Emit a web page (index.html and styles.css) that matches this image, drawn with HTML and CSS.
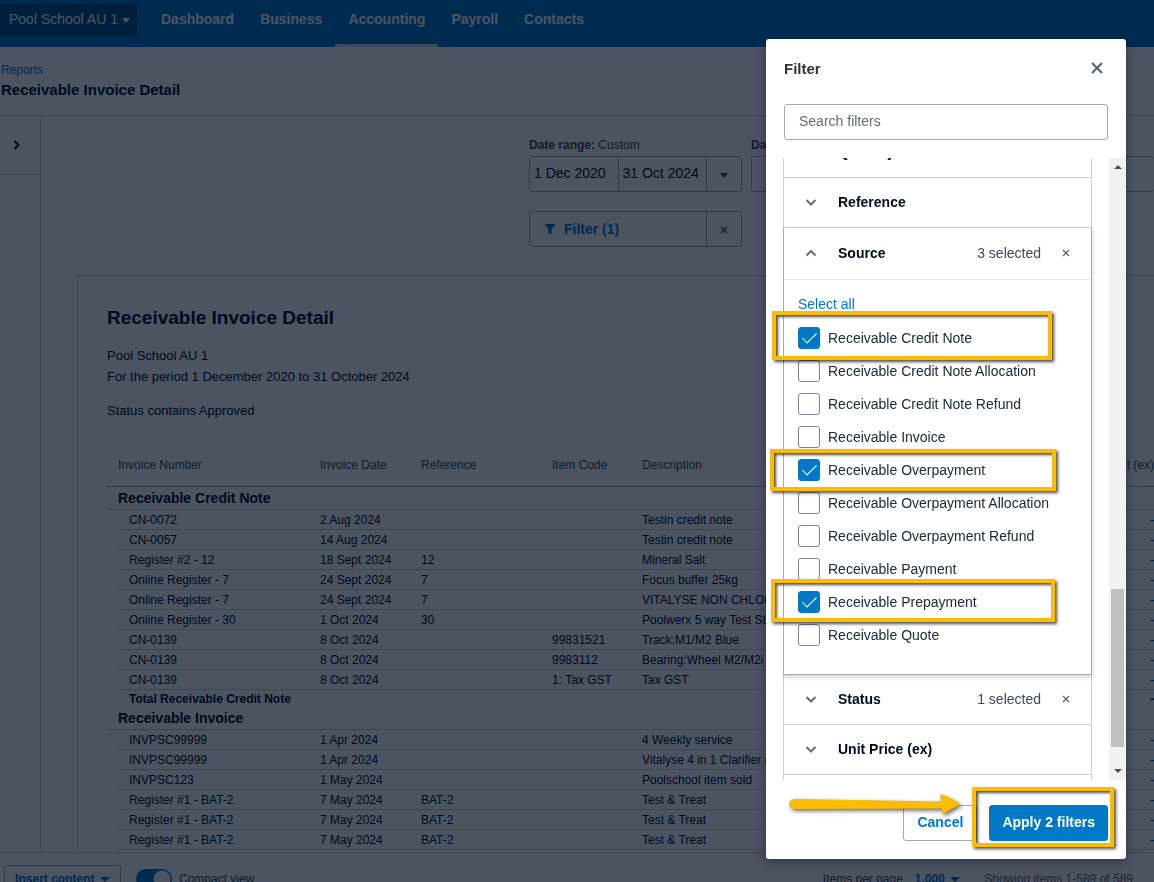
FILE: index.html
```html
<!DOCTYPE html>
<html lang="en">
<head>
    <meta charset="utf-8">
    <meta name="viewport" content="width=device-width, initial-scale=1.0">
    <title>Receivable Invoice Detail</title>
    <link rel="stylesheet" href="styles.css">
</head>
<body>
    <div class="page">
        <header class="topbar">
            <button class="org-button" type="button">Pool School AU 1 <span class="caret"></span></button>
            <nav class="topnav">
                <a class="nav-link" href="#">Dashboard</a>
                <a class="nav-link" href="#">Business</a>
                <a class="nav-link active" href="#">Accounting</a>
                <a class="nav-link" href="#">Payroll</a>
                <a class="nav-link" href="#">Contacts</a>
            </nav>
        </header>

        <div class="page-title">
            <a class="breadcrumb" href="#">Reports</a>
            <h1>Receivable Invoice Detail</h1>
        </div>

        <div class="content">
            <aside class="side">
                <button class="side-toggle" type="button" aria-label="Expand">
                    <svg width="8" height="10" viewBox="0 0 8 10"><path d="M1.5 1 L5.5 5 L1.5 9" fill="none" stroke="#000a1e" stroke-width="2"/></svg>
                </button>
            </aside>
            <main class="main">
                <div class="settings">
                    <div class="settings-row">
                        <div class="setting">
                            <label for="dateFrom"><b>Date range:</b> Custom</label>
                            <div class="field">
                                <input id="dateFrom" type="text" value="1 Dec 2020">
                                <input type="text" value="31 Oct 2024" aria-label="Date to">
                                <button class="field-end" type="button" aria-label="Choose range"><span class="caret"></span></button>
                            </div>
                        </div>
                        <div class="setting wide">
                            <label for="dateBy"><b>Date</b></label>
                            <div class="field">
                                <input id="dateBy" type="text">
                            </div>
                        </div>
                    </div>
                    <div class="field filter-field">
                        <button class="filter-open" type="button">
                            <svg width="12" height="12" viewBox="0 0 12 12"><path d="M0.5 1 H11.5 L7.5 6 V11 H4.5 V6 Z" fill="#0078c8"/></svg>
                            Filter (1)
                        </button>
                        <button class="field-end" type="button" aria-label="Clear filter">
                            <svg width="8" height="8" viewBox="0 0 8 8"><path d="M1 1 L7 7 M7 1 L1 7" stroke="#404756" stroke-width="1.2"/></svg>
                        </button>
                    </div>
                </div>

                <section class="report">
                    <h2>Receivable Invoice Detail</h2>
                    <p class="report-info">Pool School AU 1<br>For the period 1 December 2020 to 31 October 2024</p>
                    <p class="report-status">Status contains Approved</p>
                    <table class="report-table">
                        <colgroup>
                            <col class="col-indent"><col class="col-number"><col class="col-date"><col class="col-ref"><col class="col-code"><col class="col-desc"><col class="col-amount">
                        </colgroup>
                        <thead>
                            <tr><th></th><th>Invoice Number</th><th>Invoice Date</th><th>Reference</th><th>Item Code</th><th>Description</th><th class="num">Amount (ex)</th></tr>
                        </thead>
                        <tbody>
                            <tr class="group"><th></th><th colspan="6">Receivable Credit Note</th></tr>
                            <tr><td></td><td>CN-0072</td><td>2 Aug 2024</td><td></td><td></td><td>Testin credit note</td><td class="num">-</td></tr>
                            <tr><td></td><td>CN-0057</td><td>14 Aug 2024</td><td></td><td></td><td>Testin credit note</td><td class="num">-</td></tr>
                            <tr><td></td><td>Register #2 - 12</td><td>18 Sept 2024</td><td>12</td><td></td><td>Mineral Salt</td><td class="num">-</td></tr>
                            <tr><td></td><td>Online Register - 7</td><td>24 Sept 2024</td><td>7</td><td></td><td>Focus buffer 25kg</td><td class="num">-</td></tr>
                            <tr><td></td><td>Online Register - 7</td><td>24 Sept 2024</td><td>7</td><td></td><td>VITALYSE NON CHLORINE</td><td class="num">-</td></tr>
                            <tr><td></td><td>Online Register - 30</td><td>1 Oct 2024</td><td>30</td><td></td><td>Poolwerx 5 way Test Strips</td><td class="num">-</td></tr>
                            <tr><td></td><td>CN-0139</td><td>8 Oct 2024</td><td></td><td>99831521</td><td>Track:M1/M2 Blue</td><td class="num">-</td></tr>
                            <tr><td></td><td>CN-0139</td><td>8 Oct 2024</td><td></td><td>9983112</td><td>Bearing:Wheel M2/M2i</td><td class="num">-</td></tr>
                            <tr><td></td><td>CN-0139</td><td>8 Oct 2024</td><td></td><td>1: Tax GST</td><td>Tax GST</td><td class="num">-</td></tr>
                            <tr class="total"><td></td><td colspan="5">Total Receivable Credit Note</td><td class="num">-</td></tr>
                            <tr class="group"><th></th><th colspan="6">Receivable Invoice</th></tr>
                            <tr><td></td><td>INVPSC99999</td><td>1 Apr 2024</td><td></td><td></td><td>4 Weekly service</td><td class="num">-</td></tr>
                            <tr><td></td><td>INVPSC99999</td><td>1 Apr 2024</td><td></td><td></td><td>Vitalyse 4 in 1 Clarifier (1L)</td><td class="num">-</td></tr>
                            <tr><td></td><td>INVPSC123</td><td>1 May 2024</td><td></td><td></td><td>Poolschool item sold</td><td class="num">-</td></tr>
                            <tr><td></td><td>Register #1 - BAT-2</td><td>7 May 2024</td><td>BAT-2</td><td></td><td>Test &amp; Treat</td><td class="num">-</td></tr>
                            <tr><td></td><td>Register #1 - BAT-2</td><td>7 May 2024</td><td>BAT-2</td><td></td><td>Test &amp; Treat</td><td class="num">-</td></tr>
                            <tr><td></td><td>Register #1 - BAT-2</td><td>7 May 2024</td><td>BAT-2</td><td></td><td>Test &amp; Treat</td><td class="num">-</td></tr>
                        </tbody>
                    </table>
                </section>
            </main>
        </div>

        <footer class="footer">
            <button class="insert-button" type="button">Insert content <span class="caret"></span></button>
            <label class="compact"><input class="switch" type="checkbox" checked> Compact view</label>
            <div class="paging">
                <span>Items per page</span>
                <button class="per-page" type="button">1,000 <span class="caret"></span></button>
                <span class="showing">Showing items 1-589 of 589</span>
            </div>
        </footer>
    </div>

    <div class="overlay"></div>

    <div class="modal" role="dialog" aria-labelledby="modalTitle">
        <div class="modal-header">
            <h2 id="modalTitle">Filter</h2>
            <button class="icon-button" type="button" aria-label="Close">
                <svg width="12" height="12" viewBox="0 0 12 12"><path d="M1 1 L11 11 M11 1 L1 11" stroke="#59606d" stroke-width="2"/></svg>
            </button>
        </div>
        <input class="search" type="text" placeholder="Search filters" aria-label="Search filters">

        <div class="filter-area">
            <div class="filter-list" id="filterList">
                <div class="filter-item">
                    <button class="filter-head" type="button">
                        <svg class="chevron" width="12" height="8" viewBox="0 0 12 8"><path d="M1.5 2 L6 6.5 L10.5 2"/></svg>Quantity
                    </button>
                </div>
                <div class="filter-item">
                    <button class="filter-head" type="button">
                        <svg class="chevron" width="12" height="8" viewBox="0 0 12 8"><path d="M1.5 2 L6 6.5 L10.5 2"/></svg>Reference
                    </button>
                </div>
                <div class="filter-item open">
                    <div class="filter-line">
                        <button class="filter-head" type="button">
                            <svg class="chevron" width="12" height="8" viewBox="0 0 12 8"><path d="M1.5 6.5 L6 2 L10.5 6.5"/></svg>Source
                        </button>
                        <span class="count">3 selected</span>
                        <button class="icon-button" type="button" aria-label="Clear source">
                            <svg width="8" height="8" viewBox="0 0 8 8"><path d="M1 1 L7 7 M7 1 L1 7" stroke="#59606d" stroke-width="1.2"/></svg>
                        </button>
                    </div>
                    <div class="options">
                        <a class="select-all" href="#">Select all</a>
                        <label class="option"><input type="checkbox" checked>Receivable Credit Note</label>
                        <label class="option"><input type="checkbox">Receivable Credit Note Allocation</label>
                        <label class="option"><input type="checkbox">Receivable Credit Note Refund</label>
                        <label class="option"><input type="checkbox">Receivable Invoice</label>
                        <label class="option"><input type="checkbox" checked>Receivable Overpayment</label>
                        <label class="option"><input type="checkbox">Receivable Overpayment Allocation</label>
                        <label class="option"><input type="checkbox">Receivable Overpayment Refund</label>
                        <label class="option"><input type="checkbox">Receivable Payment</label>
                        <label class="option"><input type="checkbox" checked>Receivable Prepayment</label>
                        <label class="option"><input type="checkbox">Receivable Quote</label>
                    </div>
                </div>
                <div class="filter-item">
                    <div class="filter-line">
                        <button class="filter-head" type="button">
                            <svg class="chevron" width="12" height="8" viewBox="0 0 12 8"><path d="M1.5 2 L6 6.5 L10.5 2"/></svg>Status
                        </button>
                        <span class="count">1 selected</span>
                        <button class="icon-button" type="button" aria-label="Clear status">
                            <svg width="8" height="8" viewBox="0 0 8 8"><path d="M1 1 L7 7 M7 1 L1 7" stroke="#59606d" stroke-width="1.2"/></svg>
                        </button>
                    </div>
                </div>
                <div class="filter-item">
                    <button class="filter-head" type="button">
                        <svg class="chevron" width="12" height="8" viewBox="0 0 12 8"><path d="M1.5 2 L6 6.5 L10.5 2"/></svg>Unit Price (ex)
                    </button>
                </div>
                <div class="filter-item"></div>
            </div>
            <div class="scrollbar">
                <span class="scroll-up"></span>
                <div class="scroll-track"><div class="scroll-thumb"></div></div>
                <span class="scroll-down"></span>
            </div>
        </div>

        <div class="modal-footer">
            <button class="cancel" type="button">Cancel</button>
            <button class="apply" type="button">Apply 2 filters</button>
        </div>

        <!-- callouts -->
        <div class="callout callout-credit"></div>
        <div class="callout callout-overpayment"></div>
        <div class="callout callout-prepayment"></div>
        <div class="callout callout-apply"></div>
        <svg class="arrow" width="180" height="30" viewBox="0 0 180 30">
            <path d="M7 9 L154 11.5 L153 4 Q165 8 173 14.5 Q164 19 155 24.5 L155 18.5 L7 19 A5 5 0 0 1 7 9 Z" fill="#fcbd00"/>
        </svg>
    </div>

    <script>
        document.getElementById("filterList").scrollTop = 30;
    </script>
</body>
</html>
```

FILE: styles.css
```css
* {
    box-sizing: border-box;
}

body {
    margin: 0;
    font-family: "Liberation Sans", Arial, sans-serif;
    font-size: 13px;
    color: #000a1e;
    background-color: #fff;
    overflow: hidden;
}

h1, h2, p {
    margin: 0;
}

button, input {
    font-family: inherit;
    font-size: inherit;
    color: inherit;
    margin: 0;
}

button {
    padding: 0;
    border: 0;
    background: none;
    cursor: pointer;
}

a {
    color: #0078c8;
    text-decoration: none;
}

.page {
    display: flex;
    flex-direction: column;
    height: 100vh;
}

.caret {
    display: inline-block;
    border: 4px solid transparent;
    border-top: 5px solid currentColor;
    border-bottom: 0;
    vertical-align: middle;
}

/* top bar */
.topbar {
    display: flex;
    flex: none;
    height: 47px;
    background-color: #0078c8;
    color: #fff;
}

.org-button {
    height: 32px;
    margin-top: 4px;
    padding: 0 9px 2px;
    width: 137px;
    text-align: left;
    white-space: nowrap;
    font-size: 14px;
    border-radius: 0 3px 3px 0;
    background-color: #00528c;
}

.topnav {
    display: flex;
    margin-left: 11px;
}

.nav-link {
    padding: 0 13px;
    line-height: 38px;
    font-size: 14px;
    font-weight: bold;
    color: #fff;
}

.nav-link.active {
    border-bottom: 3px solid #c0dcf0;
}

.page-title {
    flex: none;
    height: 69px;
    padding: 15px 1px 0;
    border-bottom: 1px solid #ccced2;
}

.breadcrumb {
    display: block;
    font-size: 12px;
    line-height: 16px;
}

.page-title h1 {
    font-size: 15px;
    line-height: 24px;
}

.content {
    display: flex;
    flex: 1;
    min-height: 0;
    overflow: hidden;
}

.side {
    flex: none;
    width: 41px;
    border-right: 1px solid #ccced2;
}

.side-toggle {
    display: block;
    width: 100%;
    height: 59px;
    padding-right: 6px;
    border-bottom: 1px solid #ccced2;
}

.main {
    flex: 1;
    min-width: 0;
}

/* report settings */
.settings {
    width: 625px;
    margin-left: auto;
    padding-top: 20px;
}

.settings-row {
    display: flex;
    gap: 9px;
}

.setting label {
    display: block;
    font-size: 12px;
    line-height: 18px;
    margin-bottom: 2px;
    color: #404756;
}

.setting .field, .filter-field {
    width: 213px;
}

.setting.wide {
    flex: 1;
}

.setting.wide .field {
    width: 100%;
    border-right: 0;
}

.field {
    display: flex;
    height: 36px;
    border: 1px solid #a6a9b0;
    border-radius: 3px;
}

.field input {
    flex: 1;
    min-width: 0;
    padding: 0 4px 2px;
    border: 0;
    background: none;
    font-size: 14px;
}

.field input + input {
    border-left: 1px solid #a6a9b0;
}

.field-end {
    flex: none;
    width: 35px;
    border-left: 1px solid #a6a9b0;
    color: #404756;
}

.filter-field {
    margin-top: 19px;
}

.filter-open {
    display: flex;
    flex: 1;
    align-items: center;
    gap: 8px;
    padding-left: 14px;
    font-size: 14px;
    font-weight: bold;
    color: #0078c8;
}

/* report */
.report {
    margin: 28px 0 0 36px;
    padding: 30px 0 0 29px;
    border: 1px solid #ccced2;
    border-width: 1px 0 0 1px;
    border-radius: 3px 0 0 0;
}

.report h2 {
    font-size: 19px;
    line-height: 24px;
}

.report-info {
    margin-top: 15px;
    line-height: 21px;
}

.report-status {
    margin-top: 14px;
    line-height: 20px;
}

.report-table {
    width: 100%;
    margin-top: 22px;
    border-collapse: separate;
    border-spacing: 0;
    table-layout: fixed;
    font-size: 12px;
}

.col-indent { width: 11px; }
.col-number { width: 202px; }
.col-date { width: 101px; }
.col-ref { width: 131px; }
.col-code { width: 90px; }
.col-amount { width: 100px; }

.report-table th,
.report-table td {
    height: 20px;
    padding: 0;
    line-height: 16px;
    text-align: left;
    white-space: nowrap;
    overflow: hidden;
    border-bottom: 1px solid #ccced2;
}

.report-table td:first-child {
    border-bottom: 0;
}

.report-table td:nth-child(2) {
    padding-left: 11px;
}

.report-table thead th {
    height: 44px;
    font-weight: normal;
    color: #404756;
    border-bottom-color: #a6a9b0;
}

.report-table .group th {
    height: 23px;
    font-size: 14px;
}

.report-table .total td {
    height: 17px;
    font-weight: bold;
    border-bottom: 0;
}

.report-table .num {
    text-align: right;
}

/* footer */
.footer {
    display: flex;
    flex: none;
    align-items: flex-start;
    height: 30px;
    padding: 12px 21px 0 4px;
    border-top: 1px solid #ccced2;
    font-size: 12px;
    line-height: 28px;
    overflow: hidden;
    color: #404756;
}

.insert-button {
    width: 117px;
    height: 28px;
    border: 1px solid #a6a9b0;
    border-radius: 3px;
    font-weight: bold;
    color: #0078c8;
}

.insert-button .caret, .per-page .caret {
    margin-left: 2px;
    border-width: 5px 5px 0;
}

.compact {
    display: flex;
    align-items: flex-start;
    gap: 7px;
    margin-left: 15px;
}

.switch {
    appearance: none;
    width: 36px;
    height: 20px;
    margin-top: 4px;
    border-radius: 10px;
    background: radial-gradient(circle at 26px 10px, #fff 8px, #0078c8 9px);
}

.paging {
    display: flex;
    margin-left: auto;
}

.per-page {
    margin: 0 24px 0 12px;
    font-weight: bold;
    color: #0078c8;
}

.showing {
    color: #666c79;
}

.overlay {
    position: fixed;
    inset: 0;
    background-color: rgba(0, 10, 30, 0.7);
}

/* filter modal */
.modal {
    position: fixed;
    top: 39px;
    right: 28px;
    bottom: 23px;
    width: 360px;
    display: flex;
    flex-direction: column;
    border-radius: 3px;
    background-color: #fff;
    box-shadow: 0 3px 12px rgba(0, 10, 30, 0.4);
}

.modal-header {
    display: flex;
    flex: none;
    align-items: center;
    justify-content: space-between;
    height: 60px;
    padding: 0 22px 2px 18px;
}

.modal-header h2 {
    font-size: 15px;
    color: #333;
}

.icon-button {
    display: flex;
    align-items: center;
    justify-content: center;
    width: 14px;
    height: 24px;
}

.search {
    flex: none;
    height: 36px;
    margin: 5px 18px 18px;
    padding: 0 14px 2px;
    border: 1px solid #a6a9b0;
    border-radius: 3px;
    font-size: 14px;
}

.search::placeholder {
    color: #666c79;
}

.filter-area {
    display: flex;
    flex: 1;
    min-height: 0;
    padding-left: 17px;
}

.filter-list {
    flex: 1;
    padding-right: 17px;
    overflow: hidden;
}

.filter-item {
    min-height: 50px;
    border: 1px solid #ccced2;
    border-top: 0;
}

.filter-item.open {
    position: relative;
    border-color: #a6a9b0;
    box-shadow: 0 2px 5px rgba(0, 10, 30, 0.2);
}

.filter-line {
    display: flex;
    align-items: center;
    padding-right: 18px;
}

.filter-head {
    display: flex;
    flex: 1;
    align-items: center;
    gap: 21px;
    width: 100%;
    height: 47px;
    padding-left: 21px;
    font-size: 14px;
    font-weight: bold;
    text-align: left;
}

.open .filter-line {
    height: 52px;
    padding-bottom: 2px;
    border-bottom: 1px solid #e6e7e9;
}

.chevron {
    fill: none;
    stroke: #666c79;
    stroke-width: 2;
}

.count {
    margin-right: 18px;
    font-size: 14px;
    color: #404756;
}

.options {
    padding: 15px 14px 23px;
}

.select-all {
    display: block;
    line-height: 19px;
    margin-bottom: 7px;
    font-size: 14px;
}

.option {
    display: flex;
    align-items: center;
    gap: 8px;
    height: 33px;
    font-size: 14px;
    color: #21293a;
}

.option input {
    appearance: none;
    flex: none;
    width: 22px;
    height: 22px;
    border: 1px solid #808590;
    border-radius: 3px;
    background-color: #fff;
}

.option input:checked {
    border-color: #0078c8;
    background: #0078c8 url("data:image/svg+xml,%3Csvg xmlns='http://www.w3.org/2000/svg' viewBox='0 0 20 20'%3E%3Cpath d='M3.5 10 L8 15 L17.5 5.5' fill='none' stroke='white' stroke-width='1.1'/%3E%3C/svg%3E") center / 20px 20px no-repeat;
}

.scrollbar {
    display: flex;
    flex: none;
    flex-direction: column;
    align-items: center;
    justify-content: space-between;
    width: 17px;
    padding: 7px 0;
    background-color: #f1f1f1;
}

.scroll-up, .scroll-down {
    border: 4px solid transparent;
}

.scroll-up {
    border-top: 0;
    border-bottom-color: #505050;
}

.scroll-down {
    border-bottom: 0;
    border-top-color: #505050;
}

.scroll-track {
    display: flex;
    flex: 1;
    align-items: flex-end;
    padding-bottom: 22px;
}

.scroll-thumb {
    width: 13px;
    height: 158px;
    background-color: #c1c1c1;
}

.modal-footer {
    display: flex;
    flex: none;
    justify-content: flex-end;
    gap: 12px;
    padding: 25px 18px 18px;
}

.cancel, .apply {
    min-width: 74px;
    height: 36px;
    padding: 0 12px 2px;
    border: 1px solid #a6a9b0;
    border-radius: 3px;
    font-size: 14px;
    font-weight: bold;
    color: #0078c8;
}

.apply {
    border-color: #0078c8;
    background-color: #0078c8;
    color: #fff;
}

/* callouts drawn over the modal */
.callout {
    position: absolute;
    border: 4px solid #fcbd00;
    box-shadow: 2px 2px 3px rgba(0, 0, 0, 0.7), inset 2px 2px 3px rgba(0, 0, 0, 0.7);
    pointer-events: none;
}

.callout-credit {
    top: 272px;
    left: 6px;
    width: 280px;
    height: 49px;
}

.callout-overpayment {
    top: 410px;
    left: 4px;
    width: 286px;
    height: 42px;
}

.callout-prepayment {
    top: 540px;
    left: 5px;
    width: 284px;
    height: 43px;
}

.callout-apply {
    right: 12px;
    bottom: 12px;
    width: 142px;
    height: 60px;
}

.arrow {
    position: absolute;
    left: 21px;
    bottom: 39px;
    filter: drop-shadow(2px 2px 2px rgba(0, 0, 0, 0.6));
    pointer-events: none;
}
```
